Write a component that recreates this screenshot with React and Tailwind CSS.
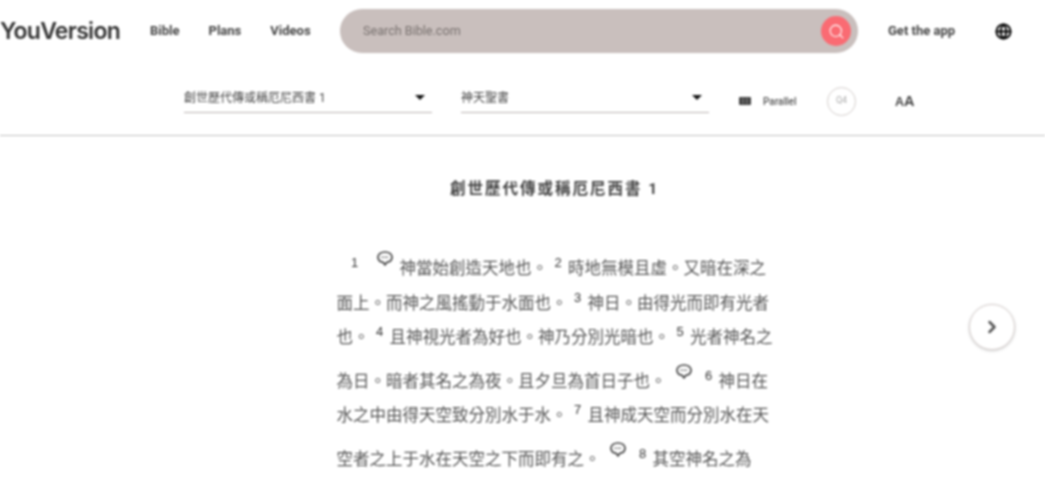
import React from "react";
import { Search, ChevronRight, Globe } from "lucide-react";

function Note() {
  return (
    <span className="inline-block w-[30px] h-[34px] ml-[2px] align-[9px] text-center">
      <svg width="16" height="15" viewBox="0 0 16 15" className="inline-block -translate-y-[2px]" fill="none">
        <path d="M8 1C4 1 1 3 1 6.2c0 2.6 2.2 4.6 5 5l2 2.6 2-2.6c2.8-.4 5-2.4 5-5C15 3 12 1 8 1z" stroke="#444" strokeWidth="1.7" />
        <path d="M4.5 6.2h7" stroke="#666" strokeWidth="1.6" strokeDasharray="1.5 1" />
      </svg>
    </span>
  );
}

function V({ n }) {
  return <span className="inline-block w-[20px] text-center text-[13px] font-['Liberation_Sans',sans-serif] align-[7px] leading-none text-[#333]">{n}</span>;
}

function Select({ label }) {
  return (
    <div className="flex items-center justify-between w-[248px] h-[26px] pb-[4px] border-b border-[#b9b2b0] text-[12px] text-[#444]">
      <span>{label}</span>
      <span className="w-0 h-0 mr-[7px] border-x-[5px] border-x-transparent border-t-[5px] border-t-[#111]" />
    </div>
  );
}

export default function App() {
  return (
    <div lang="zh-TW" className="relative h-[482px] w-[1045px] overflow-hidden bg-white blur-[0.8px] font-['Roboto','Noto_Sans_CJK_TC',sans-serif] text-[#444]">
      <header className="flex items-center h-[62px]">
        <span className="font-['Inter',sans-serif] text-[23px] font-semibold tracking-[-0.7px] text-[#333] w-[150px]">YouVersion</span>
        <nav className="flex items-center gap-[29px] w-[190px] text-[13px] font-bold text-[#444]">
          <span>Bible</span>
          <span>Plans</span>
          <span>Videos</span>
        </nav>
        <div className="flex items-center justify-between w-[518px] h-[44px] rounded-full bg-[#c9bfbd] pl-[23px] pr-[7px]">
          <span className="text-[12.6px] text-[#77706e]">Search Bible.com</span>
          <span className="flex items-center justify-center w-[30px] h-[30px] rounded-full bg-[#fa6b73]">
            <Search size={17} color="#fff" strokeWidth={1.5} />
          </span>
        </div>
        <span className="ml-[30px] w-[68px] text-[13px] font-bold text-[#444] whitespace-nowrap">Get the app</span>
        <Globe size={17} color="#000" strokeWidth={2.6} className="ml-[39px]" />
      </header>

      <div className="flex items-center h-[74px] pl-[184px] pt-[3px] border-b border-[#c0c0c0]">
        <Select label="創世歷代傳或稱厄尼西書 1" />
        <div className="w-[29px]" />
        <Select label="神天聖書" />
        <svg width="12" height="8" viewBox="0 0 12 8" className="ml-[30px] mt-[2px]">
          <rect width="12" height="8" rx="1" fill="#444" />
          <path d="M4 1v6M8 1v6" stroke="#999" strokeWidth="0.8" />
        </svg>
        <span className="ml-[12px] w-[35px] text-[10px] font-medium text-[#555] mt-[2px]">Parallel</span>
        <span className="ml-[29px] mt-[2px] flex items-center justify-center w-[29px] h-[29px] rounded-full border border-[#d4cecc] text-[9px] text-[#aaa]">Q4</span>
        <span className="ml-[39px] mt-[3px] flex items-end font-['Liberation_Sans',sans-serif] font-bold text-[#444] leading-none">
          <span className="text-[12.5px]">A</span>
          <span className="text-[14.5px]">A</span>
        </span>
      </div>

      <main className="flex flex-col items-center pl-[64px]">
        <h1 className="mt-[43px] text-[15.5px] font-bold tracking-[2px] text-[#444] leading-[20px]">創世歷代傳或稱厄尼西書 1</h1>
        <p className="mt-[44px] w-[436px] text-[16.5px] leading-[34.5px] text-[#555]">
          <span className="inline-block w-[36px] -mr-[5px] text-center text-[13px] font-['Liberation_Sans',sans-serif] align-[7px] leading-none text-[#333]">1</span>
          <Note />
          神當始創造天地也。<V n="2" />時地無模且虛。又暗在深之面上。而神之風搖動于水面也。<V n="3" />神日。由得光而即有光者也。<V n="4" />且神視光者為好也。神乃分別光暗也。<V n="5" />光者神名之為日。暗者其名之為夜。且夕旦為首日子也。<Note /><V n="6" />神日在水之中由得天空致分別水于水。<V n="7" />且神成天空而分別水在天空者之上于水在天空之下而即有之。<Note /><V n="8" />其空神名之為
        </p>
      </main>

      <button className="absolute left-[969px] top-[304px] flex items-center justify-center w-[46px] h-[46px] rounded-full border border-[#d8d0ce] bg-white shadow-[0_1px_3px_rgba(0,0,0,0.2)]">
        <ChevronRight size={20} color="#555" strokeWidth={3} />
      </button>
    </div>
  );
}
